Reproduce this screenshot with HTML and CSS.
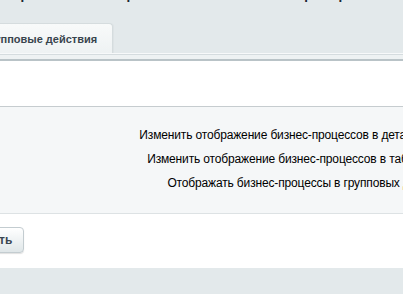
FILE: index.html
```html
<!DOCTYPE html>
<html lang="ru">
<head>
<meta charset="utf-8">
<title>Групповые действия</title>
<link rel="stylesheet" href="styles.css">
</head>
<body>
<div class="page">
  <h1 class="title">Настройки отображения новых серверов</h1>
  <div class="tabs">
    <div class="tab">Групповые действия</div>
  </div>
  <div class="panel">
    <div class="panel-top"></div>
    <div class="blank"></div>
    <div class="fields">
      <table class="form">
        <tr>
          <td class="label">Изменить отображение бизнес-процессов в деталях сайта</td>
          <td class="value"><input type="checkbox" checked></td>
        </tr>
        <tr>
          <td class="label">Изменить отображение бизнес-процессов в таблицах ИБ</td>
          <td class="value"><input type="checkbox" checked></td>
        </tr>
        <tr>
          <td class="label">Отображать бизнес-процессы в групповых действиях</td>
          <td class="value"><input type="checkbox"></td>
        </tr>
      </table>
    </div>
    <div class="buttons">
      <button class="btn" type="button">Сохранить</button>
    </div>
  </div>
</div>
</body>
</html>
```

FILE: styles.css
```css
html, body {
  margin: 0;
  padding: 0;
}
body {
  background: #e3e9eb;
  font-family: "Liberation Sans", Arial, sans-serif;
  overflow: hidden;
  width: 403px;
  height: 294px;
}
.page {
  margin-left: -70px;
  width: 900px;
}
.title {
  margin: -20px 0 22px 0;
  padding-left: 43px;
  font: normal 21px/21px "Liberation Sans", Arial, sans-serif;
  color: #1b2731;
  white-space: nowrap;
  height: 21px;
}
.tabs {
  display: flex;
  padding-left: 36px;
  height: 30px;
}
.tab {
  display: flex;
  align-items: center;
  padding: 0 15px;
  height: 30px;
  box-sizing: border-box;
  background: linear-gradient(#f8fafa, #eef2f3);
  border: 1px solid #d5dcde;
  border-bottom: none;
  border-radius: 4px 4px 0 0;
  font-weight: bold;
  font-size: 11px;
  color: #38444d;
  box-shadow: 1px 0 0 #dde3e5;
}
.panel {
  background: #fff;
}
.panel-top {
  height: 8px;
  box-sizing: border-box;
  background: #eef2f3;
  border-top: 1px solid #f7f9fa;
  border-bottom: 2px solid #b9c3c7;
  box-shadow: inset 0 1px 0 #d5dcdf;
}
.blank {
  height: 45px;
  background: #fff;
  border-bottom: 1px solid #c6cccf;
}
.fields {
  background: #f5f7f8;
  padding: 16px 0 18px;
  border-bottom: 1px solid #dde2e4;
}
.form {
  border-collapse: collapse;
}
.form td {
  height: 24px;
  padding: 0;
  font-size: 12px;
  letter-spacing: -0.15px;
  color: #000;
  vertical-align: middle;
  white-space: nowrap;
}
.form .label {
  width: 529px;
  text-align: right;
  padding-right: 6px;
}
.form .value input {
  margin: 0;
}
.buttons {
  background: #fff;
  padding: 13px 0 15px 6px;
}
.btn {
  height: 26px;
  padding: 0 11px;
  border: 1px solid #c3ccd0;
  border-radius: 4px;
  background: linear-gradient(#ffffff, #dfe6e8);
  box-shadow: 0 1px 1px rgba(0,0,0,0.12);
  font: bold 12px "Liberation Sans", Arial, sans-serif;
  color: #3a4650;
}
```
